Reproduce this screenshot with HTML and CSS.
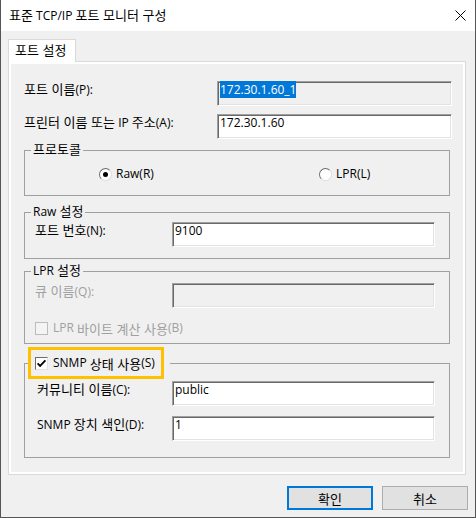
FILE: index.html
```html
<!DOCTYPE html>
<html lang="ko">
<head>
<meta charset="utf-8">
<title>표준 TCP/IP 포트 모니터 구성</title>
<link rel="stylesheet" href="styles.css">
</head>
<body>
<div class="window">
  <div class="titlebar">
    <span class="title"><span class="k">표준</span> TCP/IP <span class="k">포트 모니터 구성</span></span>
    <svg class="close" width="11" height="11" viewBox="0 0 11 11"><path d="M0.5 0.5L10.5 10.5M10.5 0.5L0.5 10.5" stroke="#000" stroke-width="1" fill="none"/></svg>
  </div>
  <div class="client">
    <div class="tabs"><div class="tab"><span class="k">포트 설정</span></div></div>
    <div class="page">
      <div class="page-inner">
        <div class="row">
          <span class="label wide"><span class="k">포트 이름</span>(P):</span>
          <div class="edit readonly"><span class="sel">172.30.1.60_1</span></div>
        </div>
        <div class="row second">
          <span class="label wide"><span class="k">프린터 이름 또는</span> IP <span class="k">주소</span>(A):</span>
          <div class="edit">172.30.1.60</div>
        </div>

        <fieldset class="group g-protocol">
          <legend><span class="k">프로토콜</span></legend>
          <div class="radios">
            <div class="radio"><span class="circle on"></span>Raw(R)</div>
            <div class="radio"><span class="circle"></span>LPR(L)</div>
          </div>
        </fieldset>

        <fieldset class="group g-raw">
          <legend>Raw <span class="k">설정</span></legend>
          <div class="row">
            <span class="label"><span class="k">포트 번호</span>(N):</span>
            <div class="edit">9100</div>
          </div>
        </fieldset>

        <fieldset class="group g-lpr">
          <legend>LPR <span class="k">설정</span></legend>
          <div class="row">
            <span class="label disabled"><span class="k">큐 이름</span>(Q):</span>
            <div class="edit readonly"></div>
          </div>
          <div class="check disabled lpr-check"><span class="box"></span>LPR <span class="k">바이트 계산 사용</span>(B)</div>
        </fieldset>

        <fieldset class="group g-snmp">
          <legend class="snmp-legend">
            <span class="hl"><span class="box"><svg width="11" height="11" viewBox="0 0 11 11"><path d="M1.6 5.4L4.1 7.9L9.4 2.4" stroke="#000" stroke-width="1.8" fill="none"/></svg></span>SNMP <span class="k">상태 사용</span>(S)</span>
          </legend>
          <div class="row">
            <span class="label snmp-label"><span class="k">커뮤니티 이름</span>(C):</span>
            <div class="edit">public</div>
          </div>
          <div class="row snmp-second">
            <span class="label snmp-label">SNMP <span class="k">장치 색인</span>(D):</span>
            <div class="edit">1</div>
          </div>
        </fieldset>
      </div>
    </div>
    <div class="buttons">
      <div class="button default"><span class="k">확인</span></div>
      <div class="button"><span class="k">취소</span></div>
    </div>
  </div>
</div>
</body>
</html>
```

FILE: styles.css
```css
* { box-sizing: border-box; }
html, body { margin: 0; padding: 0; }
body {
  width: 476px;
  height: 518px;
  background: #fff;
  font-family: "Open Sans", "Noto Sans CJK KR", sans-serif;
  font-size: 12px;
  color: #000;
}
.k {
  font-family: "Noto Sans CJK KR", "Open Sans", sans-serif;
  font-size: 13px;
  line-height: 13px;
}
.window {
  width: 476px;
  height: 518px;
  border: 1px solid #555;
  border-top: none;
  background: #f0f0f0;
  display: flex;
  flex-direction: column;
}
.titlebar {
  flex: none;
  height: 31px;
  background: #fff;
  display: flex;
  align-items: center;
  justify-content: space-between;
  padding: 0 9px 0 8px;
}
.title { line-height: 16px; }
.close { display: block; }
.client {
  flex: 1;
  display: flex;
  flex-direction: column;
  padding: 8px 7px 0 7px;
}
.tabs { display: flex; height: 22px; }
.tab {
  width: 68px;
  height: 23px;
  background: #fff;
  border: 1px solid #d9d9d9;
  border-bottom: none;
  padding: 3px 0 0 6px;
  line-height: 16px;
  position: relative;
  z-index: 1;
}
.page {
  width: 458px;
  height: 414px;
  border: 1px solid #d9d9d9;
  background: #fff;
  padding: 2px;
}
.page-inner {
  height: 100%;
  background: #f0f0f0;
  padding: 17px 11px 0 13px;
}
.row {
  display: flex;
  align-items: baseline;
}
.row.second { margin-top: 8px; }
.label { flex: none; width: 137px; line-height: 16px; white-space: nowrap; }
.label.wide { width: 193px; }
.label.snmp-label { width: 135px; }
.disabled { color: #a0a0a0; }
.edit {
  flex: 1;
  height: 25px;
  background: #fff;
  border: 1px solid;
  border-color: #a0a0a0 #fff #fff #a0a0a0;
  box-shadow: inset 1px 1px 0 #696969, inset -1px -1px 0 #e3e3e3;
  padding: 0 2px;
  line-height: 16px;
  white-space: nowrap;
}
.edit::before { content: "\200b"; }
.edit.readonly { background: #f0f0f0; }
.sel {
  background: #0078d7;
  color: #fff;
}
.group {
  margin: 0 2px 0 0;
  border: 1px solid #a0a0a0;
  padding: 0 14px 0 10px;
  min-width: 0;
}
.group legend {
  padding: 0 2px;
  margin-left: -4px;
  line-height: 16px;
  height: 16px;
}
.g-protocol { margin-top: 3px; padding-top: 8px; padding-bottom: 13px; }
.g-raw { margin-top: 8px; padding-top: 2px; padding-bottom: 11px; }
.g-lpr { margin-top: 4px; padding-top: 4px; padding-bottom: 7px; }
.g-snmp { margin-top: 3px; padding: 2px 14px 16px 12px; }
.snmp-second { margin-top: 10px; }
.radios {
  display: grid;
  grid-template-columns: 220px auto;
  padding-left: 64px;
  height: 16px;
}
.radio {
  display: flex;
  align-items: center;
  line-height: 16px;
}
.circle {
  width: 13px;
  height: 13px;
  border-radius: 50%;
  border: 1px solid;
  border-color: #6d6d6d #dcdcdc #dcdcdc #6d6d6d;
  background: #fff;
  margin-right: 4px;
  display: flex;
  align-items: center;
  justify-content: center;
}
.circle.on::after {
  content: "";
  width: 5px;
  height: 5px;
  border-radius: 50%;
  background: #000;
}
.check {
  display: flex;
  align-items: center;
  line-height: 16px;
  height: 16px;
  white-space: pre;
}
.lpr-check { margin-top: 12px; }
.box {
  flex: none;
  width: 13px;
  height: 13px;
  border: 1px solid;
  border-color: #6d6d6d #e3e3e3 #e3e3e3 #6d6d6d;
  background: #fff;
  margin-right: 5px;
  display: flex;
  align-items: center;
  justify-content: center;
}
.check.disabled .box {
  border-color: #bcbcbc;
  background: #f4f4f4;
}
.group legend.snmp-legend {
  padding: 0 6px 0 0;
  margin-left: -9px;
  line-height: 16px;
  height: 32px;
}
.hl {
  display: flex;
  align-items: center;
  height: 32px;
  border: 3px solid #ffc000;
  padding: 0 6px 0 4px;
  white-space: pre;
}
.buttons {
  display: flex;
  justify-content: flex-end;
  gap: 9px;
  margin-top: 11px;
}
.button {
  width: 86px;
  height: 24px;
  background: #e1e1e1;
  border: 1px solid #adadad;
  display: flex;
  align-items: center;
  justify-content: center;
  line-height: 16px;
}
.button.default { border: 2px solid #0078d7; }
```
